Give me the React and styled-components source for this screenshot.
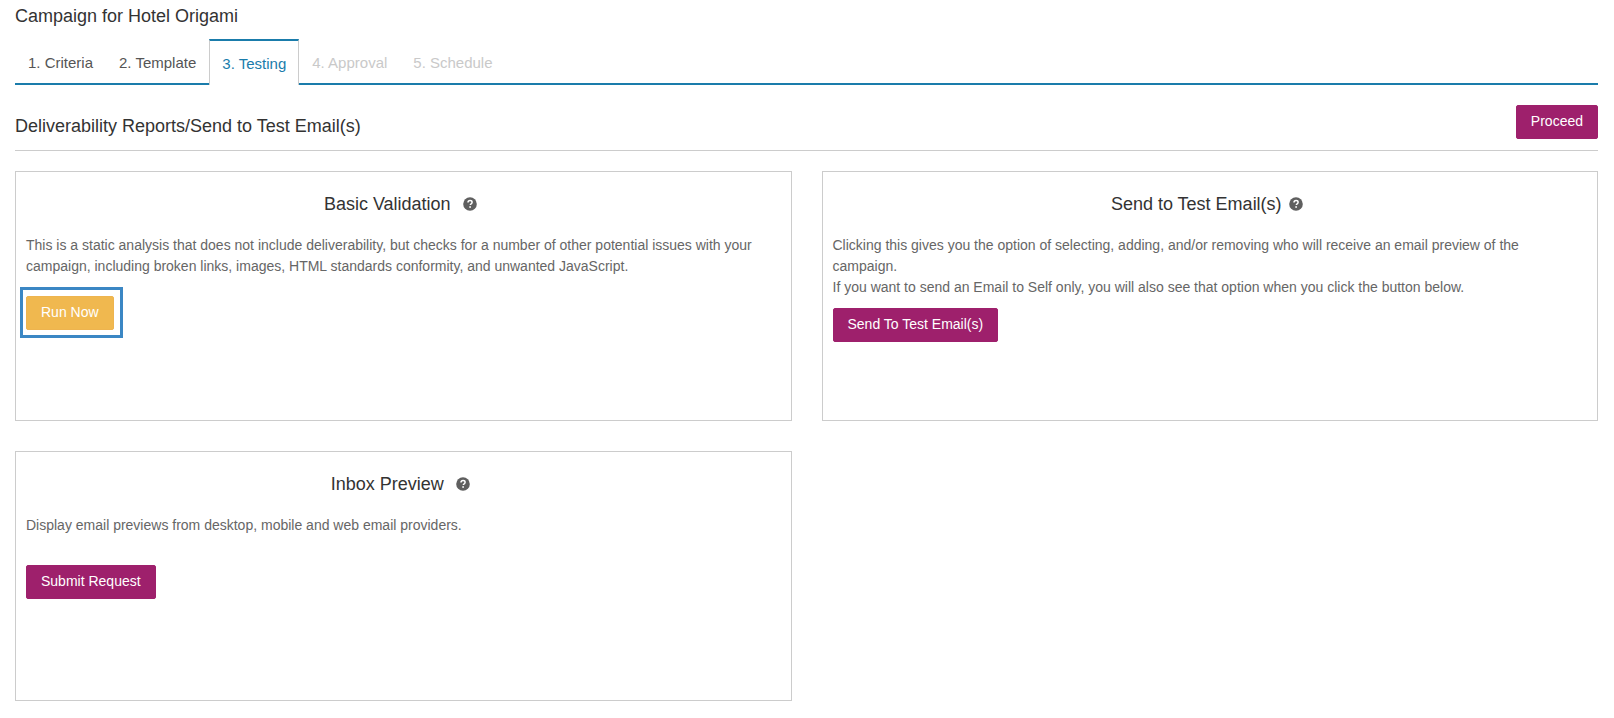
import React from "react";
import styled, { createGlobalStyle } from "styled-components";

const Global = createGlobalStyle`
  html, body { margin: 0; padding: 0; background: #fff; }
  body { font-family: "Liberation Sans", Arial, sans-serif; font-size: 14px; color: #333; }
`;

const Page = styled.div`
  width: 1614px;
  height: 718px;
  box-sizing: border-box;
  padding: 6px 16px 0 15px;
  overflow: hidden;
`;

const CampaignTitle = styled.h1`
  margin: 0;
  height: 33px;
  font-size: 18px;
  line-height: 20px;
  font-weight: 400;
  color: #333;
`;

const Tabs = styled.div`
  display: flex;
  height: 46px;
  box-sizing: border-box;
  border-bottom: 2px solid #1a7cab;
`;

const Tab = styled.div`
  box-sizing: border-box;
  height: 46px;
  padding: 0 13px;
  line-height: 48px;
  font-size: 15px;
  color: ${(p) => (p.$active ? "#1a7cab" : p.$disabled ? "#c9c9c9" : "#555")};
  ${(p) =>
    p.$active &&
    `
    background: #fff;
    border: 1px solid #ccc;
    border-top: 2px solid #1a7cab;
    border-bottom: none;
    line-height: 46px;
    padding: 0 12px;
  `}
`;

const SectionHeader = styled.div`
  display: flex;
  justify-content: space-between;
  align-items: flex-start;
  box-sizing: border-box;
  margin-top: 20px;
  height: 46px;
  border-bottom: 1px solid #ccc;
`;

const SectionTitle = styled.h2`
  margin: 9px 0 0;
  font-size: 18px;
  line-height: 24px;
  font-weight: 400;
  color: #333;
`;

const Button = styled.button`
  display: block;
  height: 34px;
  box-sizing: border-box;
  padding: 0 14px 2px;
  border: 1px solid ${(p) => (p.$warning ? "#eeb44f" : "#9e206c")};
  border-radius: 2px;
  background: ${(p) => (p.$warning ? "#f0b84f" : "#9e206c")};
  color: #fff;
  font-family: inherit;
  font-size: 14px;
  line-height: 30px;
`;

const CardGrid = styled.div`
  display: grid;
  grid-template-columns: 1fr 1fr;
  grid-auto-rows: 250px;
  column-gap: 30px;
  row-gap: 30px;
  margin-top: 20px;
`;

const Card = styled.section`
  box-sizing: border-box;
  border: 1px solid #ccc;
  padding: 20px 16px 0 10px;
`;

const CardTitle = styled.h3`
  display: flex;
  justify-content: center;
  align-items: center;
  gap: ${(p) => p.$gap}px;
  margin: 0;
  height: 24px;
  font-size: 18px;
  line-height: 24px;
  font-weight: 400;
  color: #333;
`;

const Description = styled.p`
  margin: 19px 0 ${(p) => p.$after}px;
  font-size: 14px;
  line-height: 21px;
  color: #666;
`;

const Highlight = styled.div`
  position: relative;
  width: fit-content;
  &::after {
    content: "";
    position: absolute;
    top: -9px;
    right: -9px;
    bottom: -8px;
    left: -6px;
    border: 3px solid #3b87c4;
    pointer-events: none;
  }
`;

const Help = () => (
  <svg width="14" height="14" viewBox="0 0 14 14" aria-hidden="true">
    <circle cx="7" cy="7" r="6.8" fill="#5f5f5f" />
    <path
      d="M5 5.4c0-1.1.9-1.9 2.1-1.9 1.2 0 2 .7 2 1.7 0 .8-.4 1.2-1 1.6-.5.3-.7.5-.7 1v.3"
      fill="none"
      stroke="#fff"
      strokeWidth="1.5"
    />
    <rect x="6.3" y="9.2" width="1.6" height="1.6" fill="#fff" />
  </svg>
);

export default function App() {
  return (
    <Page>
      <Global />
      <CampaignTitle>Campaign for Hotel Origami</CampaignTitle>
      <Tabs>
        <Tab>1. Criteria</Tab>
        <Tab>2. Template</Tab>
        <Tab $active>3. Testing</Tab>
        <Tab $disabled>4. Approval</Tab>
        <Tab $disabled>5. Schedule</Tab>
      </Tabs>
      <SectionHeader>
        <SectionTitle>Deliverability Reports/Send to Test Email(s)</SectionTitle>
        <Button>Proceed</Button>
      </SectionHeader>
      <CardGrid>
        <Card>
          <CardTitle $gap={12}>
            Basic Validation <Help />
          </CardTitle>
          <Description $after={19}>
            This is a static analysis that does not include deliverability, but checks for a number of other potential issues with your campaign, including broken links, images, HTML standards conformity, and unwanted JavaScript.
          </Description>
          <Highlight>
            <Button $warning>Run Now</Button>
          </Highlight>
        </Card>
        <Card>
          <CardTitle $gap={7}>
            Send to Test Email(s) <Help />
          </CardTitle>
          <Description $after={10}>
            Clicking this gives you the option of selecting, adding, and/or removing who will receive an email preview of the campaign.
            <br />
            If you want to send an Email to Self only, you will also see that option when you click the button below.
          </Description>
          <Button>Send To Test Email(s)</Button>
        </Card>
        <Card>
          <CardTitle $gap={12}>
            Inbox Preview <Help />
          </CardTitle>
          <Description $after={29}>
            Display email previews from desktop, mobile and web email providers.
          </Description>
          <Button>Submit Request</Button>
        </Card>
      </CardGrid>
    </Page>
  );
}
